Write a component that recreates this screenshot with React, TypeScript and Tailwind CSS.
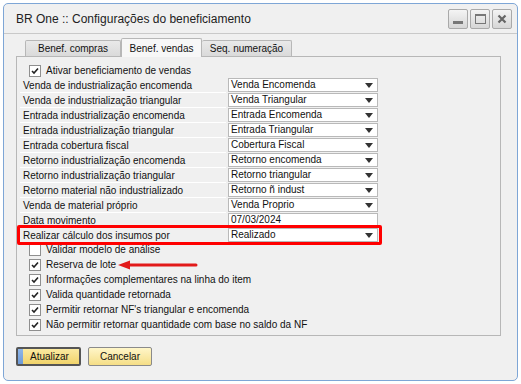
import React from 'react';

const rows = [
  { label: 'Venda de industrialização encomenda', value: 'Venda Encomenda' },
  { label: 'Venda de industrialização triangular', value: 'Venda Triangular' },
  { label: 'Entrada industrialização encomenda', value: 'Entrada Encomenda' },
  { label: 'Entrada industrialização triangular', value: 'Entrada Triangular' },
  { label: 'Entrada cobertura fiscal', value: 'Cobertura Fiscal' },
  { label: 'Retorno industrialização encomenda', value: 'Retorno encomenda' },
  { label: 'Retorno industrialização triangular', value: 'Retorno triangular' },
  { label: 'Retorno material não industrializado', value: 'Retorno ñ indust' },
  { label: 'Venda de material próprio', value: 'Venda Proprio' },
];

const checks = [
  { label: 'Validar modelo de análise', checked: false },
  { label: 'Reserva de lote', checked: true },
  { label: 'Informações complementares na linha do item', checked: true },
  { label: 'Valida quantidade retornada', checked: true },
  { label: "Permitir retornar NF's triangular e encomenda", checked: true },
  { label: 'Não permitir retornar quantidade com base no saldo da NF', checked: true },
];

function CheckBox({ checked }: { checked: boolean }) {
  return (
    <div className="w-[12px] h-[12px] border border-[#8f8f8f] bg-white flex items-center justify-center shrink-0">
      {checked && (
        <svg width="8" height="8" viewBox="0 0 8 8">
          <path d="M1 4 L3 6 L7 1.5" stroke="#222" strokeWidth="1.6" fill="none" />
        </svg>
      )}
    </div>
  );
}

function CheckRow({ label, checked }: { label: string; checked: boolean }) {
  return (
    <div className="h-[15px] flex items-center pl-[9px] gap-[5px]">
      <CheckBox checked={checked} />
      <span>{label}</span>
    </div>
  );
}

function Arrow() {
  return (
    <svg width="8" height="5" viewBox="0 0 8 5">
      <path d="M0 0 H8 L4 5 Z" fill="#333" />
    </svg>
  );
}

function FieldRow({ label, value, combo = true }: { label: string; value: string; combo?: boolean }) {
  return (
    <div className="h-[15px] flex items-stretch">
      <div className="w-[206px] pl-[3px] flex items-center border-b border-white">{label}</div>
      <div className="ml-[2px] w-[150px] h-[14px] bg-white border border-[#b9b9b9] flex items-center justify-between pl-[2px] pr-[4px]">
        <span className="leading-none">{value}</span>
        {combo && <Arrow />}
      </div>
    </div>
  );
}

export default function App() {
  return (
    <div className="w-[521px] h-[384px] bg-white p-[3px]" style={{ fontFamily: '"Liberation Sans", Arial, sans-serif' }}>
      <div className="w-[515px] h-[378px] rounded-[5px] border border-[#7ea6d6] bg-[#f0f0f0] flex flex-col text-[10px] text-[#111]">
        {/* title bar */}
        <div className="h-[30px] flex items-center justify-between pl-[12px] pr-[5px] border-b border-[#c9c9c9] rounded-t-[5px]">
          <span className="text-[12px] text-[#222]">BR One :: Configurações do beneficiamento</span>
          <div className="flex gap-[2px]">
            {['min', 'max', 'close'].map(k => (
              <div key={k} className="w-[20px] h-[20px] border border-[#a9a9a9] rounded-[2px] bg-gradient-to-b from-[#f4f4f4] to-[#d6d6d6] flex items-center justify-center">
                {k === 'min' && <div className="w-[10px] h-[3px] bg-[#777] mt-[8px]" />}
                {k === 'max' && <div className="w-[11px] h-[10px] border border-[#777] border-t-2" />}
                {k === 'close' && (
                  <svg width="10" height="10" viewBox="0 0 10 10">
                    <path d="M1.5 1.5 L8.5 8.5 M8.5 1.5 L1.5 8.5" stroke="#666" strokeWidth="2.2" />
                  </svg>
                )}
              </div>
            ))}
          </div>
        </div>

        <div className="pl-[12px] pr-[16px] pt-[4px]">
          {/* tabs */}
          <div className="flex items-end pl-[9px] h-[18px] relative z-10">
            <div className="w-[96px] h-[16px] border border-[#b7b7b7] border-b-0 bg-gradient-to-b from-[#e9e9e9] to-[#dadada] flex items-center justify-center rounded-t-[2px]">Benef. compras</div>
            <div className="w-[81px] h-[19px] border border-[#b7b7b7] border-b-0 bg-[#f7f7f7] flex items-center justify-center -mb-px rounded-t-[2px]">Benef. vendas</div>
            <div className="w-[90px] h-[16px] border border-[#b7b7b7] border-b-0 border-l-0 bg-gradient-to-b from-[#e9e9e9] to-[#dadada] flex items-center justify-center rounded-t-[2px]">Seq. numeração</div>
          </div>

          {/* panel */}
          <div className="h-[280px] border border-[#b7b7b7] pt-[6px] pl-[3px] relative">
            <CheckRow label="Ativar beneficiamento de vendas" checked />
            {rows.map(r => (
              <FieldRow key={r.label} label={r.label} value={r.value} />
            ))}
            <FieldRow label="Data movimento" value="07/03/2024" combo={false} />
            <div className="relative">
              <FieldRow label="Realizar cálculo dos insumos por" value="Realizado" />
              <div className="absolute left-[-3px] top-[-3px] w-[365px] h-[20px] border-[3px] border-[#ff0000] rounded-[2px]" />
            </div>
            <div className="-mt-[1px]">
              {checks.map(c => (
                <CheckRow key={c.label} label={c.label} checked={c.checked} />
              ))}
            </div>
            <svg className="absolute left-[101px] top-[203px]" width="80" height="10" viewBox="0 0 80 10">
              <path d="M10 5 H78" stroke="#e21a1a" strokeWidth="3" strokeLinecap="round" />
              <path d="M0 5 L12 0.5 L12 9.5 Z" fill="#e21a1a" />
            </svg>
          </div>

          {/* buttons */}
          <div className="flex gap-[7px] mt-[11px]">
            <div className="w-[65px] h-[19px] rounded-[2px] border-2 border-[#555] bg-gradient-to-b from-[#fbeaa0] to-[#f1d36a] flex items-center relative overflow-hidden">
              <div className="absolute left-0 top-0 bottom-0 w-[5px] bg-gradient-to-b from-[#8fb6e8] to-[#6f9bd8]" />
              <span className="pl-[12px]">Atualizar</span>
            </div>
            <div className="w-[64px] h-[19px] rounded-[2px] border border-[#8a8a8a] bg-gradient-to-b from-[#fff6c8] to-[#f5de86] flex items-center justify-center">Cancelar</div>
          </div>
        </div>
      </div>
    </div>
  );
}
